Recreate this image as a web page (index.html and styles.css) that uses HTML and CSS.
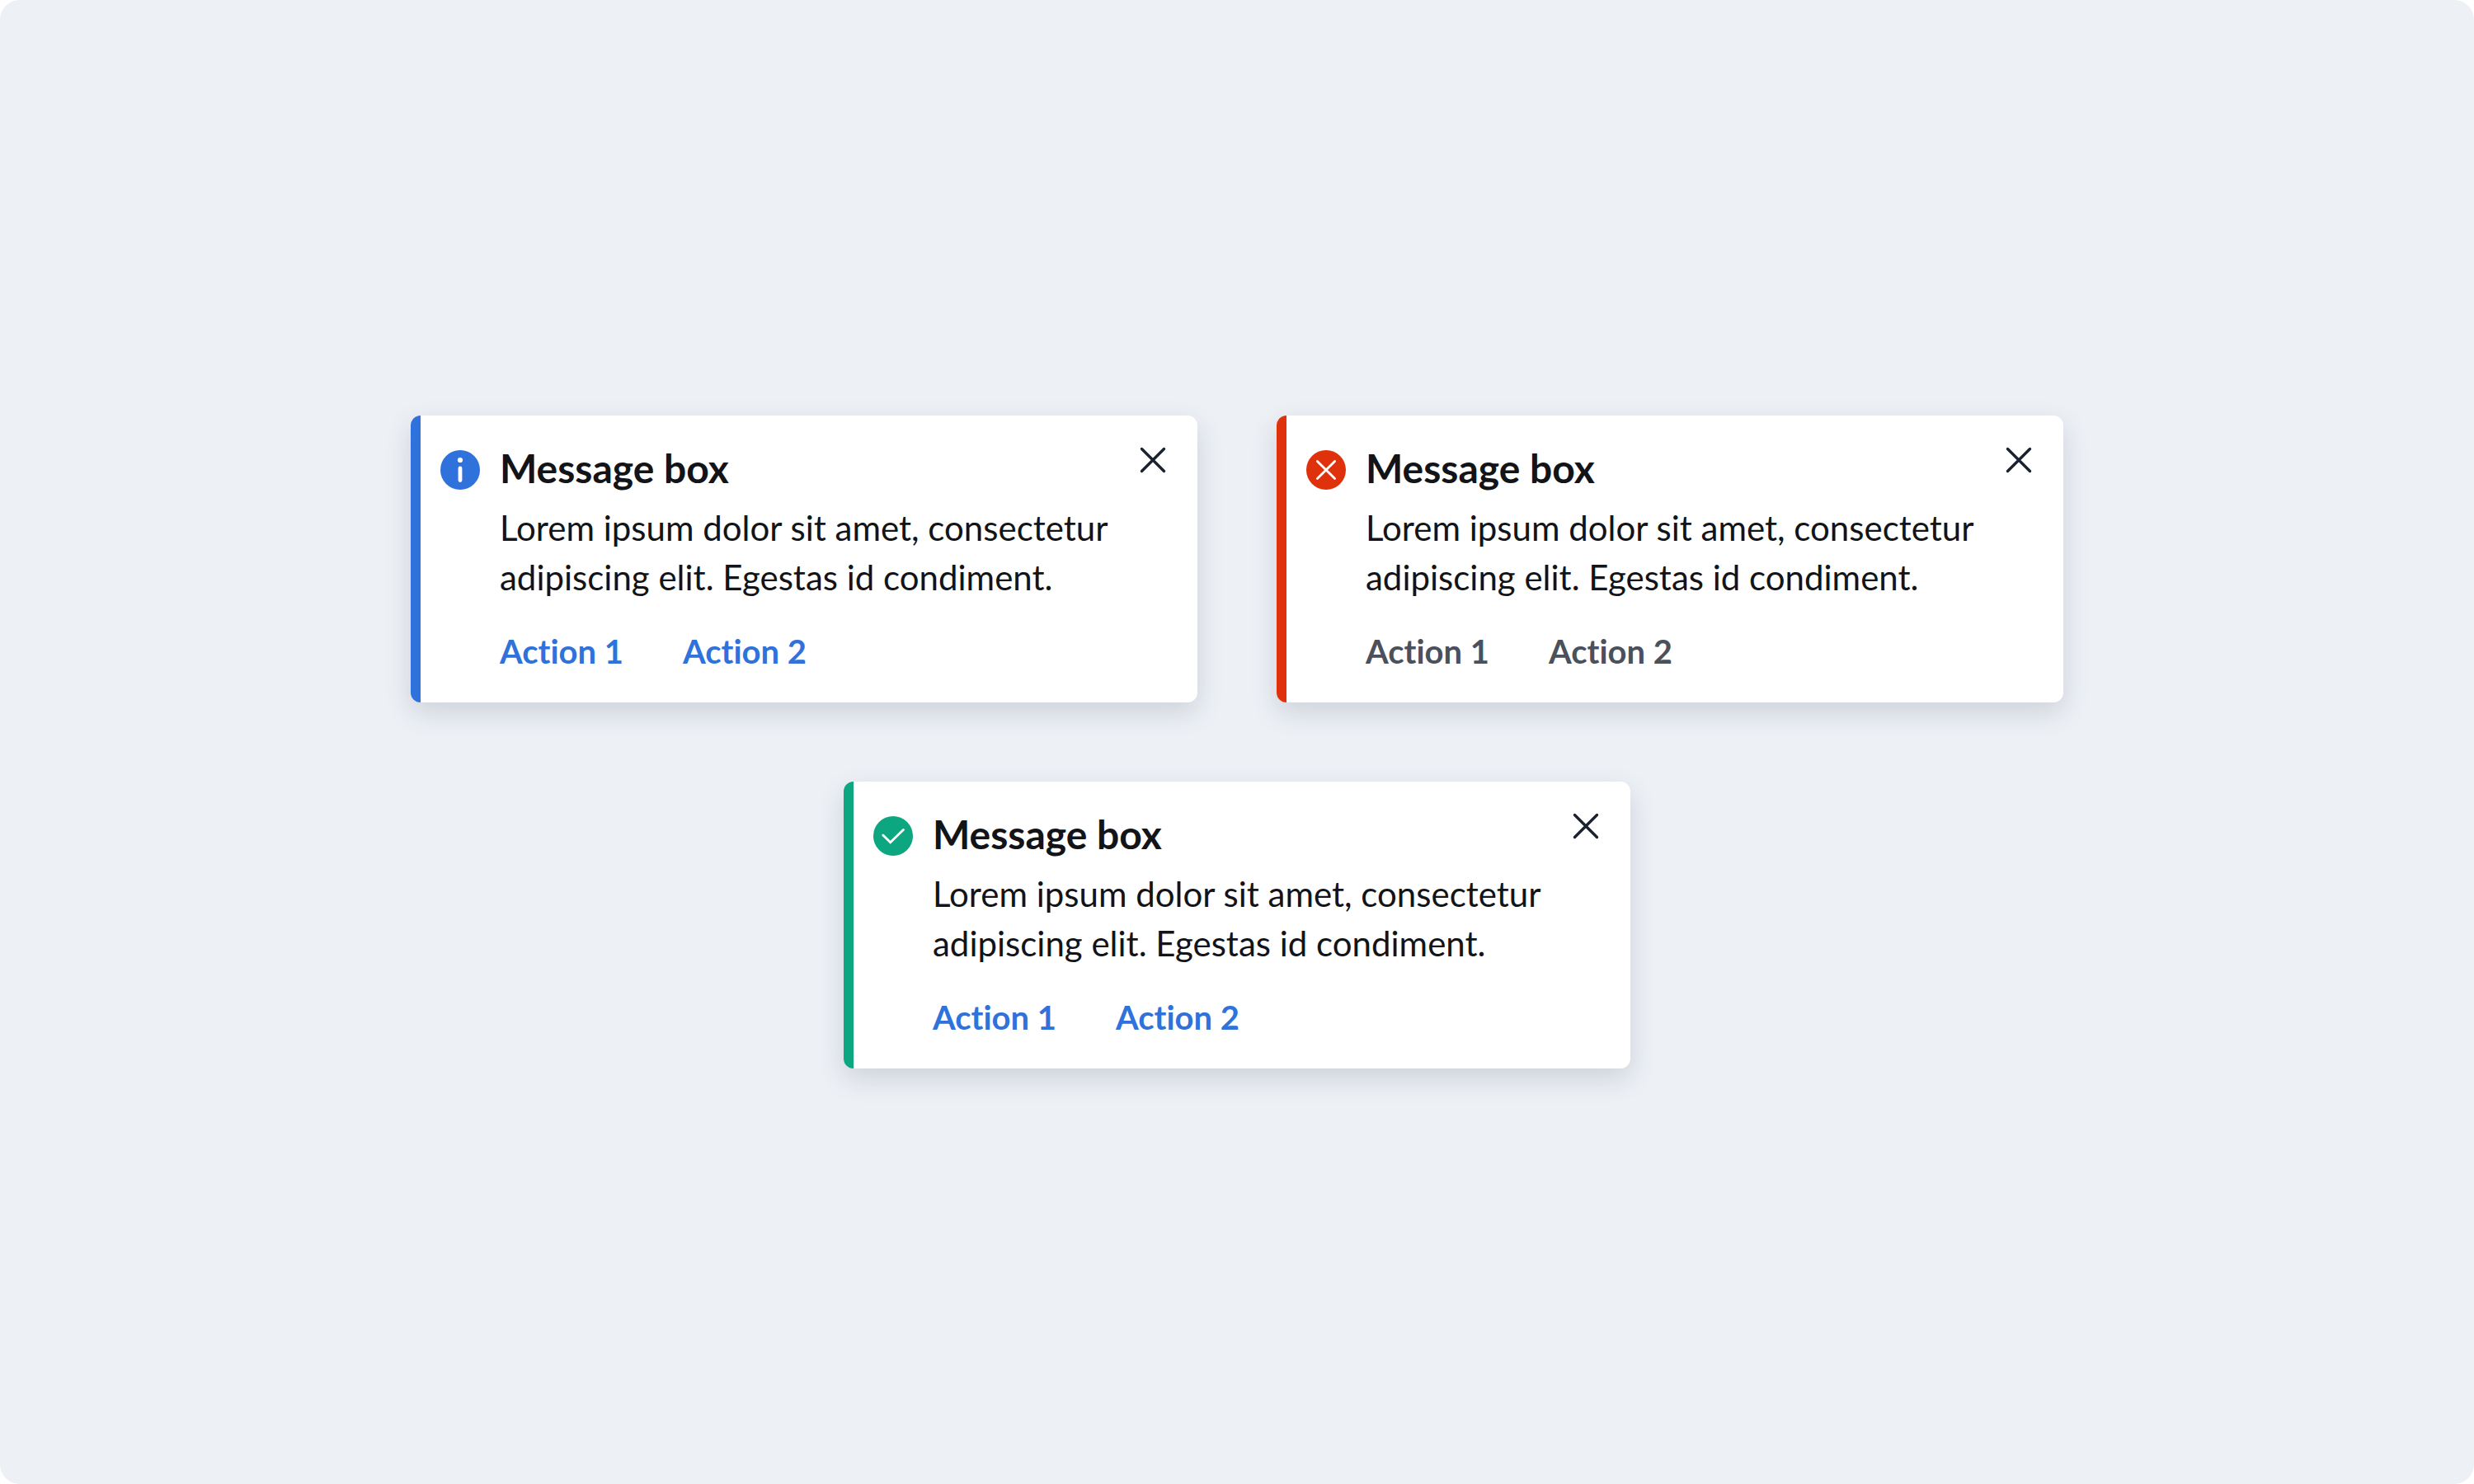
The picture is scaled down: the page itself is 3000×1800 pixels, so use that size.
FILE: index.html
```html
<!DOCTYPE html>
<html lang="en">
<head>
  <meta charset="utf-8">
  <meta name="viewport" content="width=device-width, initial-scale=1">
  <title>Message boxes</title>
  <link rel="stylesheet" href="styles.css">
</head>
<body>
  <main class="stage">
    <div class="messages">
      <article class="message message--info">
        <svg class="message__icon" viewBox="0 0 48 48" aria-hidden="true">
          <circle cx="24" cy="24" r="24" fill="currentColor"/>
          <circle cx="24" cy="12" r="3.1" fill="#fff"/>
          <path d="M24 22v14.6" fill="none" stroke="#fff" stroke-width="4.8" stroke-linecap="round"/>
        </svg>
        <div class="message__content">
          <h2 class="message__title">Message box</h2>
          <p class="message__text">Lorem ipsum dolor sit amet, consectetur adipiscing elit. Egestas id condiment.</p>
          <div class="message__actions">
            <button class="action" type="button">Action 1</button>
            <button class="action" type="button">Action 2</button>
          </div>
        </div>
        <button class="message__close" type="button" aria-label="Close">
          <svg class="message__cross" viewBox="0 0 48 48" aria-hidden="true"><path d="M10.5 10.5l27 27M37.5 10.5l-27 27"/></svg>
        </button>
      </article>

      <article class="message message--error">
        <svg class="message__icon" viewBox="0 0 48 48" aria-hidden="true">
          <circle cx="24" cy="24" r="24" fill="currentColor"/>
          <path d="M13.4 13.4l21.2 21.2M34.6 13.4L13.4 34.6" fill="none" stroke="#fff" stroke-width="2.8" stroke-linecap="round"/>
        </svg>
        <div class="message__content">
          <h2 class="message__title">Message box</h2>
          <p class="message__text">Lorem ipsum dolor sit amet, consectetur adipiscing elit. Egestas id condiment.</p>
          <div class="message__actions">
            <button class="action action--neutral" type="button">Action 1</button>
            <button class="action action--neutral" type="button">Action 2</button>
          </div>
        </div>
        <button class="message__close" type="button" aria-label="Close">
          <svg class="message__cross" viewBox="0 0 48 48" aria-hidden="true"><path d="M10.5 10.5l27 27M37.5 10.5l-27 27"/></svg>
        </button>
      </article>

      <article class="message message--success">
        <svg class="message__icon" viewBox="0 0 48 48" aria-hidden="true">
          <circle cx="24" cy="24" r="24" fill="currentColor"/>
          <path d="M11.8 23l8.9 8.7 15.7-15.3" fill="none" stroke="#fff" stroke-width="2.8" stroke-linecap="round"/>
        </svg>
        <div class="message__content">
          <h2 class="message__title">Message box</h2>
          <p class="message__text">Lorem ipsum dolor sit amet, consectetur adipiscing elit. Egestas id condiment.</p>
          <div class="message__actions">
            <button class="action" type="button">Action 1</button>
            <button class="action" type="button">Action 2</button>
          </div>
        </div>
        <button class="message__close" type="button" aria-label="Close">
          <svg class="message__cross" viewBox="0 0 48 48" aria-hidden="true"><path d="M10.5 10.5l27 27M37.5 10.5l-27 27"/></svg>
        </button>
      </article>
    </div>
  </main>
</body>
</html>
```
FILE: styles.css
```css
* {
  box-sizing: border-box;
}

body {
  margin: 0;
  background: #fff;
  color: #121418;
  font-family: Lato, "Open Sans", sans-serif;
  font-variant-ligatures: none;
}

.stage {
  display: flex;
  align-items: center;
  justify-content: center;
  min-height: 100vh;
  border-radius: 24px;
  background: #edf1f6;
}

.messages {
  display: flex;
  flex-wrap: wrap;
  justify-content: center;
  gap: 96px;
  max-width: 2004px;
}

.message {
  display: flex;
  flex: 0 1 954px;
  align-items: flex-start;
  gap: 24px;
  padding: 30px 30px 38px 24px;
  border-left: 12px solid;
  border-radius: 12px;
  background: #fff;
  box-shadow: 0 12px 32px rgba(28, 36, 56, 0.15);
}

.message--info {
  color: #2f72db;
}

.message--error {
  color: #df320c;
}

.message--success {
  color: #0ca680;
}

.message__icon {
  flex: none;
  width: 48px;
  height: 48px;
  margin-top: 12px;
}

.message__content {
  flex: 1;
  min-width: 0;
  padding-top: 2px;
  color: #121418;
}

.message__title {
  margin: 0 0 10px;
  font-size: 48px;
  font-weight: 700;
  line-height: 64px;
}

.message__text {
  margin: 0 0 36px;
  font-size: 42px;
  line-height: 60px;
}

.message__actions {
  display: flex;
  gap: 72px;
}

.action {
  padding: 0;
  border: 0;
  background: none;
  color: #2f72db;
  font: inherit;
  font-size: 40px;
  font-weight: 700;
  font-variant-ligatures: none;
  line-height: 48px;
  cursor: pointer;
}

.action--neutral {
  color: #4a515c;
}

.message__close {
  flex: none;
  width: 48px;
  height: 48px;
  padding: 0;
  border: 0;
  background: none;
  color: #1a2230;
  cursor: pointer;
}

.message__cross {
  display: block;
  width: 48px;
  height: 48px;
  fill: none;
  stroke: currentColor;
  stroke-width: 3.4;
  stroke-linecap: round;
}
```
